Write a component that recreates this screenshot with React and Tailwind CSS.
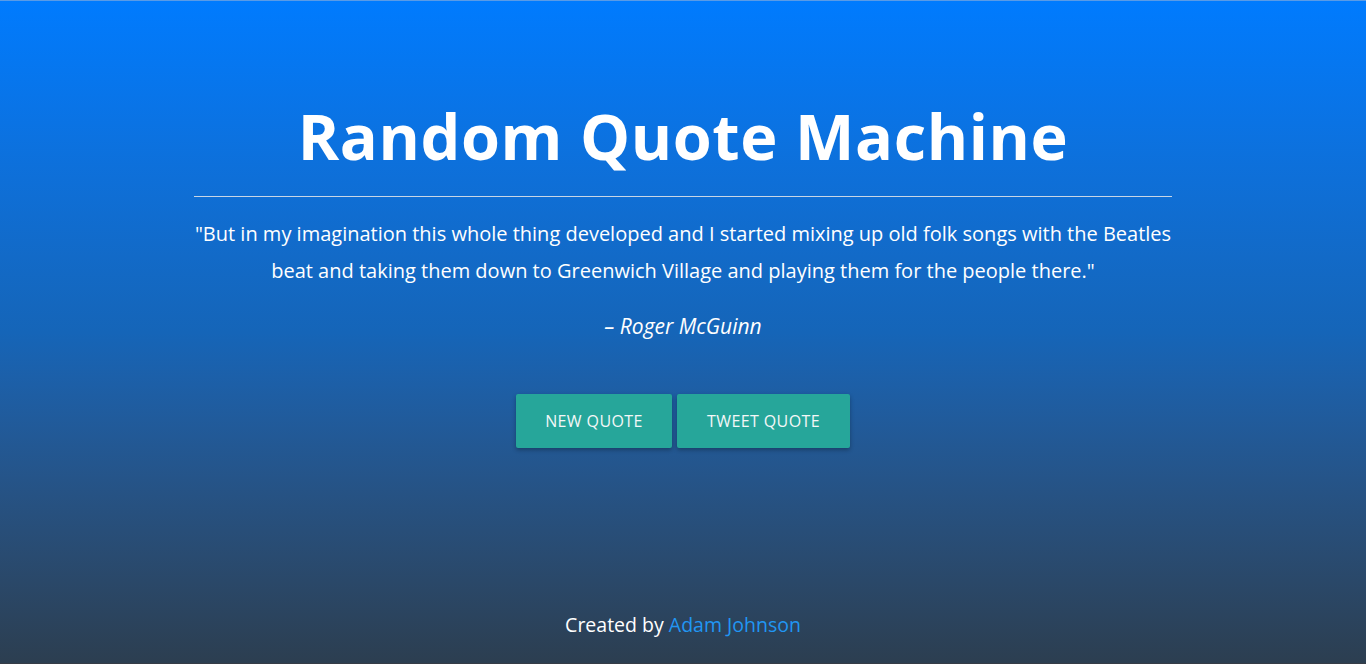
export default function App() {
  return (
    <div
      className="relative flex h-[664px] w-full flex-col items-center overflow-hidden border-t border-[#5a9be6] bg-gradient-to-b from-[#007bfe] via-[#1565b8] to-[#2c3e50] text-white"
      style={{ fontFamily: '"Open Sans", "Noto Sans", sans-serif' }}
    >
      <h1 className="mt-[92px] text-[63px] font-bold leading-[86px] tracking-[0.6px]">Random Quote Machine</h1>
      <div className="mt-[17px] h-px w-[978px] bg-[#c7d6e6]" />
      <p className="mt-[18px] w-[985px] text-center text-[20px] font-medium leading-[37px]">
        "But in my imagination this whole thing developed and I started mixing up old folk songs with the Beatles beat and taking them down to Greenwich Village and playing them for the people there."
      </p>
      <p className="mt-[19px] text-[21px] font-medium italic leading-[37px]">– Roger McGuinn</p>
      <div className="mt-[49px] flex gap-[5px]">
        <button className="h-[54px] w-[156px] rounded-[2px] bg-[#26a69a] text-[16px] font-medium tracking-[0.4px] text-[#f4f7f7] shadow-[0_2px_4px_rgba(0,0,0,0.3)]">
          NEW QUOTE
        </button>
        <button className="h-[54px] w-[173px] rounded-[2px] bg-[#26a69a] text-[16px] font-medium tracking-[0.4px] text-[#f4f7f7] shadow-[0_2px_4px_rgba(0,0,0,0.3)]">
          TWEET QUOTE
        </button>
      </div>
      <div className="mt-auto mb-[24px] text-[19.5px] font-medium leading-[30px]">
        Created by <a className="text-[#2196f3]">Adam Johnson</a>
      </div>
      <div className="absolute bottom-0 left-0 h-[1px] w-full bg-[#363c46]" />
    </div>
  );
}
